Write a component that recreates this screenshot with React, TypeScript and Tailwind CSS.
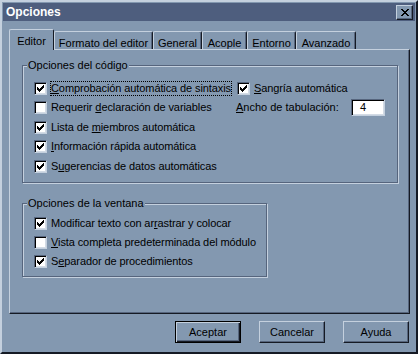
import React from "react";

const checkPixels: [number, number][] = [
  [6, 0],
  [5, 1], [6, 1],
  [0, 2], [4, 2], [5, 2], [6, 2],
  [0, 3], [1, 3], [3, 3], [4, 3], [5, 3],
  [0, 4], [1, 4], [2, 4], [3, 4], [4, 4],
  [1, 5], [2, 5], [3, 5],
  [2, 6],
];

const closePixels: [number, number][] = [
  [0, 0], [1, 0], [6, 0], [7, 0],
  [1, 1], [2, 1], [5, 1], [6, 1],
  [2, 2], [3, 2], [4, 2], [5, 2],
  [3, 3], [4, 3],
  [2, 4], [3, 4], [4, 4], [5, 4],
  [1, 5], [2, 5], [5, 5], [6, 5],
  [0, 6], [1, 6], [6, 6], [7, 6],
];

const CheckBox = ({ checked }: { checked: boolean }) => (
  <span className="flex items-center justify-center w-[13px] h-[13px] shrink-0 bg-white border border-t-[#56657d] border-l-[#56657d] border-r-[#c4d0de] border-b-[#c4d0de] shadow-[inset_1px_1px_0_#000,inset_-1px_-1px_0_#d3dbe5]">
    {checked && (
      <svg width="7" height="7" viewBox="0 0 7 7" shapeRendering="crispEdges">
        {checkPixels.map(([x, y]) => (
          <rect key={`${x}-${y}`} x={x} y={y} width="1" height="1" fill="#000" />
        ))}
      </svg>
    )}
  </span>
);

type RowProps = {
  checked: boolean;
  label: React.ReactNode;
  focus?: boolean;
  h: string;
};

const Row = ({ checked, label, focus, h }: RowProps) => (
  <div className={`flex items-center ${h}`}>
    <CheckBox checked={checked} />
    <span
      className={`ml-[3px] leading-[13px] whitespace-nowrap tracking-[-0.1px] border ${
        focus ? "border-dotted border-black" : "border-transparent"
      }`}
    >
      {label}
    </span>
  </div>
);

const tabs = [
  { name: "Formato del editor", w: "w-[99px]" },
  { name: "General", w: "w-[49px]" },
  { name: "Acople", w: "w-[45px]" },
  { name: "Entorno", w: "w-[49px]" },
  { name: "Avanzado", w: "w-[60px]" },
];

const Button = ({ label, def }: { label: string; def?: boolean }) => (
  <button
    className={`w-[66px] h-[22px] text-[11px] text-black bg-[#8398b0] ${
      def
        ? "border border-black shadow-[inset_1px_1px_0_#c4d0de,inset_-1px_-1px_0_#151a24,inset_-2px_-2px_0_#56657d]"
        : "border border-t-[#c4d0de] border-l-[#c4d0de] border-r-[#151a24] border-b-[#151a24] shadow-[inset_-1px_-1px_0_#56657d]"
    }`}
  >
    {label}
  </button>
);

export default function App() {
  return (
    <div
      className="w-[418px] h-[354px] bg-[#8398b0] border-2 border-t-[#c4d0de] border-l-[#c4d0de] border-r-[#151a24] border-b-[#151a24] p-[1px] text-[11px] text-black flex flex-col"
      style={{ fontFamily: '"Liberation Sans", Arial, sans-serif' }}
    >
      {/* title bar */}
      <div className="h-[18px] bg-[#4e5e7e] flex items-center justify-between pl-[3px] pr-[2px]">
        <span className="text-white font-bold text-[12px] leading-none">Opciones</span>
        <button className="w-[17px] h-[15px] flex items-center justify-center bg-[#8398b0] border border-t-[#c4d0de] border-l-[#c4d0de] border-r-[#151a24] border-b-[#151a24] shadow-[inset_-1px_-1px_0_#56657d]">
          <svg width="8" height="7" viewBox="0 0 8 7" shapeRendering="crispEdges">
            {closePixels.map(([x, y]) => (
              <rect key={`${x}-${y}`} x={x} y={y} width="1" height="1" fill="#000" />
            ))}
          </svg>
        </button>
      </div>

      {/* tabs */}
      <div className="ml-[6px] mt-[8px] flex items-end h-[20px] relative z-10">
        <div className="w-[45px] h-[21px] -mb-px bg-[#8398b0] border-l border-t border-r border-l-[#c4d0de] border-t-[#c4d0de] border-r-[#151a24] rounded-t-[2px] flex items-start justify-center pt-[3px]">
          Editor
        </div>
        {tabs.map((t) => (
          <div
            key={t.name}
            className={`${t.w} h-[18px] border-l border-t border-r border-l-[#c4d0de] border-t-[#c4d0de] border-r-[#151a24] rounded-t-[2px] shadow-[inset_-1px_0_0_#56657d] flex items-start justify-center pt-[3px]`}
          >
            {t.name}
          </div>
        ))}
      </div>

      {/* panel */}
      <div className="ml-[6px] w-[401px] h-[265px] border border-t-[#c4d0de] border-l-[#c4d0de] border-r-[#151a24] border-b-[#151a24] shadow-[inset_-1px_-1px_0_#56657d] pl-[12px] pt-[9px]">
        <fieldset className="w-[376px] h-[124px] border border-[#56657d] shadow-[inset_1px_1px_0_#c4d0de,1px_1px_0_#c4d0de] pl-[4px] pt-[6px]">
          <legend className="px-[1px] leading-[13px] bg-[#8398b0]">Opciones del código</legend>
          <div className="flex pl-[7px]">
            <div className="w-[202px]">
              <Row
                h="h-[20px]"
                checked
                focus
                label={<><u>C</u>omprobación automática de sintaxis</>}
              />
              <Row
                h="h-[19px]"
                checked={false}
                label={<>Requerir <u>d</u>eclaración de variables</>}
              />
              <Row
                h="h-[20px]"
                checked
                label={<>Lista de <u>m</u>iembros automática</>}
              />
              <Row
                h="h-[19px]"
                checked
                label={<><u>I</u>nformación rápida automática</>}
              />
              <Row
                h="h-[20px]"
                checked
                label={<>S<u>u</u>gerencias de datos automáticas</>}
              />
            </div>
            <div className="pl-[1px]">
              <Row
                h="h-[20px]"
                checked
                label={<><u>S</u>angría automática</>}
              />
              <div className="flex items-center h-[19px] -ml-[1px]">
                <span className="w-[115px] whitespace-nowrap">
                  <u>A</u>ncho de tabulación:
                </span>
                <div className="w-[34px] h-[17px] bg-white border border-t-[#56657d] border-l-[#56657d] border-r-[#c4d0de] border-b-[#c4d0de] shadow-[inset_1px_1px_0_#000,inset_-1px_-1px_0_#d3dbe5] pl-[8px] leading-[15px]">
                  4
                </div>
              </div>
            </div>
          </div>
        </fieldset>

        <fieldset className="mt-[14px] w-[245px] h-[80px] border border-[#56657d] shadow-[inset_1px_1px_0_#c4d0de,1px_1px_0_#c4d0de] pl-[4px] pt-[4px]">
          <legend className="px-[1px] leading-[13px] bg-[#8398b0]">Opciones de la ventana</legend>
          <div className="pl-[7px]">
            <Row
              h="h-[19px]"
              checked
              label={<>Modificar texto con ar<u>r</u>astrar y colocar</>}
            />
            <Row
              h="h-[19px]"
              checked={false}
              label={<><u>V</u>ista completa predeterminada del módulo</>}
            />
            <Row
              h="h-[19px]"
              checked
              label={<>S<u>e</u>parador de procedimientos</>}
            />
          </div>
        </fieldset>
      </div>

      {/* buttons */}
      <div className="flex justify-end gap-[18px] mt-[7px] pr-[6px]">
        <Button label="Aceptar" def />
        <Button label="Cancelar" />
        <Button label="Ayuda" />
      </div>
    </div>
  );
}
